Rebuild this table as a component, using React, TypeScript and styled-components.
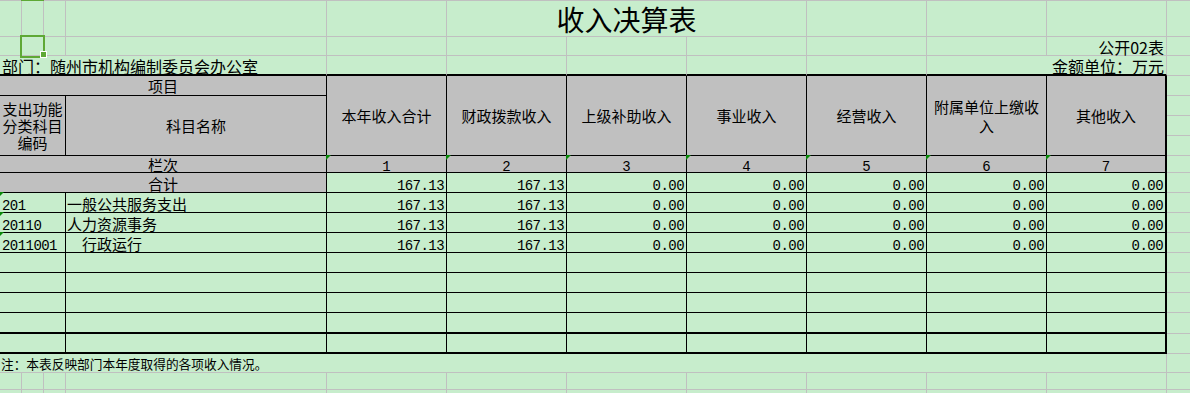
import React from 'react';
import styled, { createGlobalStyle } from 'styled-components';

const C = {
  sheet: '#c7edcc',
  header: '#c0c0c0',
  grid: '#c0c0c0',
  ink: '#000000',
  select: '#5ea835',
  mark: '#0a8a0a',
};

type Line = 'none' | 'grid' | 'line' | 'thick';
const line = (l: Line) =>
  ({
    none: 'none',
    grid: `1px solid ${C.grid}`,
    line: `1px solid ${C.ink}`,
    thick: `2px solid ${C.ink}`,
  }[l]);

const GlobalStyle = createGlobalStyle`
  html, body { margin: 0; padding: 0; background: ${C.sheet}; }
  body {
    font-family: "Noto Sans CJK SC", "Noto Sans", sans-serif;
    color: ${C.ink};
    overflow: hidden;
  }
`;

const Sheet = styled.div`
  display: grid;
  grid-template-columns: 22px 22px 22px 261px repeat(7, 120px) 1fr;
  grid-template-rows:
    36px 19px 20px
    20px 20px 20px 20px
    17px 20px
    20px 20px 20px
    20px 20px 20px 21px 20px
    19px 17px 1fr;
  width: 1190px;
  height: 393px;
  box-sizing: border-box;
  border-top: 1px solid ${C.grid};
  background: ${C.sheet};
`;

interface CellProps {
  $c: number;
  $cs?: number;
  $r: number;
  $rs?: number;
  $right?: Line;
  $bottom?: Line;
  $gray?: boolean;
}

const Cell = styled.div<CellProps>`
  grid-column: ${(p) => p.$c} / span ${(p) => p.$cs ?? 1};
  grid-row: ${(p) => p.$r} / span ${(p) => p.$rs ?? 1};
  box-sizing: border-box;
  position: relative;
  min-width: 0;
  display: flex;
  white-space: nowrap;
  border-right: ${(p) => line(p.$right ?? 'grid')};
  border-bottom: ${(p) => line(p.$bottom ?? 'grid')};
  background: ${(p) => (p.$gray ? C.header : C.sheet)};
`;

const Title = styled(Cell)`
  justify-content: center;
  align-items: flex-end;
  font-size: 28px;
  line-height: 33px;
`;

const Caption = styled(Cell)<{ $end?: boolean }>`
  justify-content: ${(p) => (p.$end ? 'flex-end' : 'flex-start')};
  align-items: flex-end;
  font-size: 16px;
  line-height: 16px;
  padding: 0 2px 0 2px;
  overflow: visible;
`;

const Head = styled(Cell)`
  justify-content: center;
  align-items: center;
  text-align: center;
  white-space: normal;
  font-size: 15px;
  line-height: 19px;
  padding: 0 2px;
`;

const CodeHead = styled(Head)`
  line-height: 17px;
  padding: 0;
`;

const Label = styled(Cell)<{ $lh: number }>`
  justify-content: center;
  align-items: flex-end;
  font-size: 15px;
  line-height: ${(p) => p.$lh}px;
`;

const Index = styled(Cell)`
  justify-content: center;
  align-items: flex-end;
  font-family: "Liberation Mono", monospace;
  font-size: 14px;
  line-height: 10px;
`;

const Code = styled(Cell)`
  align-items: flex-end;
  font-family: "Liberation Mono", monospace;
  font-size: 14px;
  letter-spacing: -0.55px;
  line-height: 12px;
  padding-left: 2px;
`;

const Name = styled(Cell)<{ $indent?: number }>`
  align-items: flex-end;
  font-size: 15px;
  line-height: 17px;
  padding-left: ${(p) => 1 + (p.$indent ?? 0) * 15}px;
`;

const Num = styled(Cell)`
  justify-content: flex-end;
  align-items: flex-end;
  font-family: "Liberation Mono", monospace;
  font-size: 14px;
  letter-spacing: -0.55px;
  line-height: 12px;
  padding-right: 2px;
`;

const Note = styled(Cell)`
  align-items: center;
  font-size: 12.7px;
  line-height: 19px;
  padding-left: 1px;
`;

const Mark = styled.span`
  position: absolute;
  top: -1px;
  left: -1px;
  width: 0;
  height: 0;
  border-top: 5px solid ${C.mark};
  border-right: 5px solid transparent;
`;

const ColumnTick = styled.span`
  position: absolute;
  top: -1px;
  left: -1px;
  width: 23px;
  height: 1px;
  background: ${C.select};
`;

const Selection = styled.span`
  position: absolute;
  left: -2px;
  top: -2px;
  width: 25px;
  height: 23px;
  box-sizing: border-box;
  border: 2px solid ${C.select};
  z-index: 2;
`;

const Handle = styled.span`
  position: absolute;
  left: 18px;
  top: 14px;
  width: 7px;
  height: 7px;
  box-sizing: border-box;
  background: ${C.select};
  border: 1px solid #ffffff;
  z-index: 3;
`;

const heads = ['本年收入合计', '财政拨款收入', '上级补助收入', '事业收入', '经营收入', '附属单位上缴收入', '其他收入'];
const dataCols = [5, 6, 7, 8, 9, 10, 11];
const totals = ['167.13', '167.13', '0.00', '0.00', '0.00', '0.00', '0.00'];
const items = [
  { code: '201', name: '一般公共服务支出', indent: 0, vals: totals },
  { code: '20110', name: '人力资源事务', indent: 0, vals: totals },
  { code: '2011001', name: '行政运行', indent: 1, vals: totals },
];

const edgeOf = (c: number): Line => (c === 11 ? 'thick' : 'line');

export default function App() {
  return (
    <>
      <GlobalStyle />
      <Sheet>
        {/* row 1: title */}
        {[1, 2, 3, 4, 5].map((c) => (
          <Cell key={`r1-${c}`} $c={c} $r={1}>
            {c === 2 && <ColumnTick />}
          </Cell>
        ))}
        <Title $c={6} $cs={3} $r={1}>收入决算表</Title>
        {[9, 10, 11].map((c) => (
          <Cell key={`r1-${c}`} $c={c} $r={1} />
        ))}
        <Cell $c={12} $r={1} $right="none" />

        {/* row 2 */}
        {[1, 2, 3, 4, 5, 6, 7, 8, 9, 10].map((c) => (
          <Cell key={`r2-${c}`} $c={c} $r={2}>
            {c === 2 && (
              <>
                <Selection />
                <Handle />
              </>
            )}
          </Cell>
        ))}
        <Caption $c={11} $r={2} $end>公开02表</Caption>
        <Cell $c={12} $r={2} $right="none" />

        {/* row 3 */}
        <Caption $c={1} $cs={4} $r={3} $bottom="thick">部门：随州市机构编制委员会办公室</Caption>
        {[5, 6, 7, 8, 9].map((c) => (
          <Cell key={`r3-${c}`} $c={c} $r={3} $bottom="thick" />
        ))}
        <Caption $c={10} $cs={2} $r={3} $bottom="thick" $end>金额单位：万元</Caption>
        <Cell $c={12} $r={3} $right="none" />

        {/* header */}
        <Head $c={1} $cs={4} $r={4} $gray $right="line" $bottom="line">项目</Head>
        {heads.map((h, i) => (
          <Head key={h} $c={dataCols[i]} $r={4} $rs={4} $gray $right={edgeOf(dataCols[i])} $bottom="line">
            {h}
          </Head>
        ))}
        <CodeHead $c={1} $cs={3} $r={5} $rs={3} $gray $right="line" $bottom="line">
          支出功能分类科目编码
        </CodeHead>
        <Head $c={4} $r={5} $rs={3} $gray $right="line" $bottom="line">科目名称</Head>
        {[4, 5, 6, 7].map((r) => (
          <Cell key={`m-${r}`} $c={12} $r={r} $right="none" />
        ))}

        {/* index row */}
        <Label $c={1} $cs={4} $r={8} $lh={15} $gray $right="line" $bottom="line">栏次</Label>
        {dataCols.map((c, i) => (
          <Index key={`ix-${c}`} $c={c} $r={8} $gray $right={edgeOf(c)} $bottom="line">
            <Mark />
            {i + 1}
          </Index>
        ))}
        <Cell $c={12} $r={8} $right="none" />

        {/* total row */}
        <Label $c={1} $cs={4} $r={9} $lh={17} $gray $right="line" $bottom="line">合计</Label>
        {dataCols.map((c, i) => (
          <Num key={`t-${c}`} $c={c} $r={9} $right={edgeOf(c)} $bottom="line">
            {totals[i]}
          </Num>
        ))}
        <Cell $c={12} $r={9} $right="none" />

        {/* data rows */}
        {items.map((it, k) => {
          const r = 10 + k;
          return (
            <React.Fragment key={it.code}>
              <Code $c={1} $cs={3} $r={r} $right="line" $bottom="line">
                <Mark />
                {it.code}
              </Code>
              <Name $c={4} $r={r} $indent={it.indent} $right="line" $bottom="line">
                {it.name}
              </Name>
              {dataCols.map((c, i) => (
                <Num key={`d-${r}-${c}`} $c={c} $r={r} $right={edgeOf(c)} $bottom="line">
                  {it.vals[i]}
                </Num>
              ))}
              <Cell $c={12} $r={r} $right="none" />
            </React.Fragment>
          );
        })}

        {/* empty rows */}
        {[13, 14, 15, 16, 17].map((r) => {
          const bottom: Line = r >= 16 ? 'thick' : 'line';
          return (
            <React.Fragment key={`e-${r}`}>
              <Cell $c={1} $cs={3} $r={r} $right="line" $bottom={bottom} />
              <Cell $c={4} $r={r} $right="line" $bottom={bottom} />
              {dataCols.map((c) => (
                <Cell key={`e-${r}-${c}`} $c={c} $r={r} $right={edgeOf(c)} $bottom={bottom} />
              ))}
              <Cell $c={12} $r={r} $right="none" />
            </React.Fragment>
          );
        })}

        {/* note */}
        <Note $c={1} $cs={11} $r={18}>注：本表反映部门本年度取得的各项收入情况。</Note>
        <Cell $c={12} $r={18} $right="none" />

        {/* trailing grid */}
        {[19, 20].map((r) =>
          [1, 2, 3, 4, 5, 6, 7, 8, 9, 10, 11, 12].map((c) => (
            <Cell
              key={`g-${r}-${c}`}
              $c={c}
              $r={r}
              $right={c === 12 ? 'none' : 'grid'}
              $bottom={r === 20 ? 'none' : 'grid'}
            />
          ))
        )}
      </Sheet>
    </>
  );
}
